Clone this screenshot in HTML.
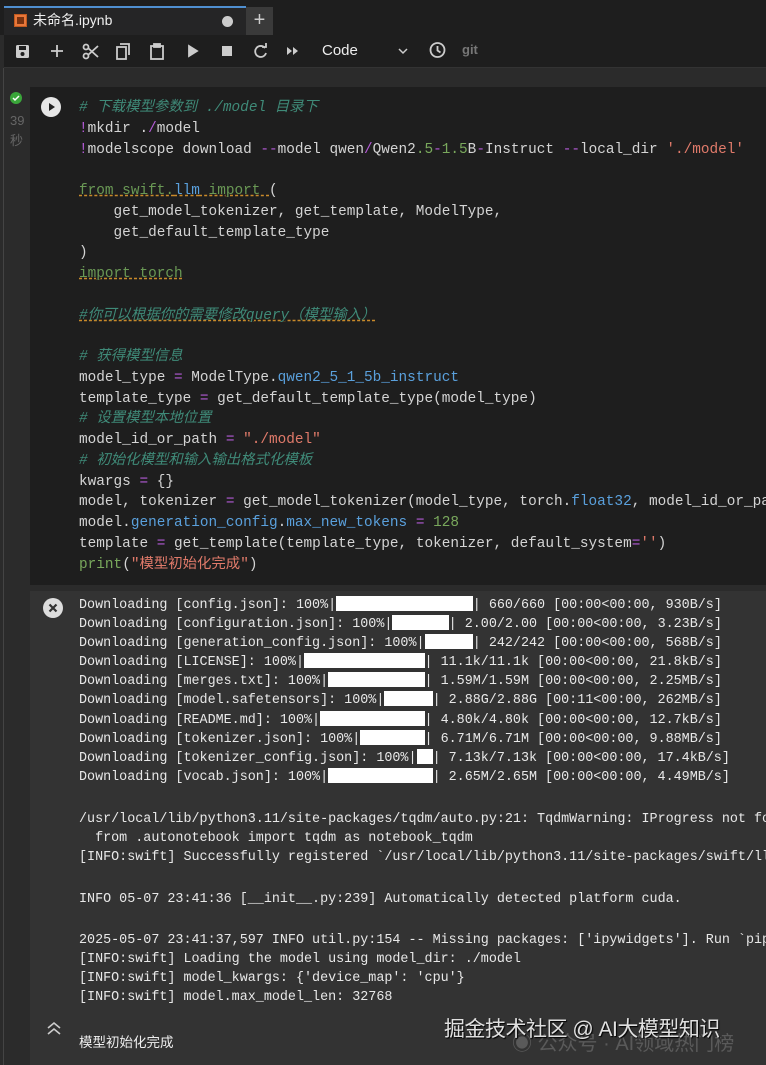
<!DOCTYPE html>
<html><head><meta charset="utf-8"><style>
*{margin:0;padding:0;box-sizing:border-box}
body{width:766px;height:1065px;overflow:hidden;background:#2b2b2b;font-family:"Liberation Sans","Noto Sans CJK SC",sans-serif;position:relative;color:#ddd}
.abs{position:absolute}
pre{font-family:"Liberation Mono","Noto Sans CJK SC",monospace;white-space:pre}
.code{left:79px;top:98px;font-size:14.4px;line-height:20.75px;color:#d4d4d4}
.out{left:79px;font-size:13.4px;line-height:19.1px;color:#e8e8e8}
.c{color:#3f8a78;font-style:italic}
.k{color:#6a9955;text-decoration:underline dashed #c98a2a}
.m{color:#b35ad6}
.n{color:#79a85c}
.s{color:#e07a6a}
.b{color:#5aa0dc}
.o{color:#b35ad6}
.bar{display:inline-block;background:#fff;height:15px;vertical-align:-3px}
</style></head><body>
<div class="abs" style="left:0;top:0;width:766px;height:35px;background:#1e1e1e"></div>
<div class="abs" style="left:4px;top:6px;width:242px;height:29px;background:#252526;border-top:2px solid #4f8fd0"></div>
<div class="abs" style="left:14px;top:14px;width:13px;height:13px;background:#e8773a;border:1px solid #c05a20"><div style="margin:2px;width:7px;height:7px;background:#7a3310"></div></div>
<div class="abs" style="left:33px;top:10px;font-size:14px;color:#eee">未命名.ipynb</div>
<div class="abs" style="left:222px;top:16px;width:11px;height:11px;border-radius:50%;background:#ccc"></div>
<div class="abs" style="left:246px;top:7px;width:27px;height:28px;background:#3a3a3a;color:#ccc;font-size:20px;text-align:center;line-height:26px">+</div>
<div class="abs" style="left:4px;top:35px;width:762px;height:33px;background:#1e1e1e;border-bottom:1px solid #333"></div>
<svg class="abs" style="left:0;top:35px" width="500" height="33" fill="none" stroke="#ccc" stroke-width="1.8">
<rect x="16" y="10" width="13" height="13" rx="1.5" fill="#ccc" stroke="none"/><rect x="19" y="11" width="7" height="4" fill="#1e1e1e" stroke="none"/><circle cx="22.5" cy="19" r="2" fill="#1e1e1e" stroke="none"/>
<path d="M57 10v12M51 16h12"/>
<circle cx="86" cy="21" r="2.5"/><circle cx="86" cy="12" r="2.5"/><path d="M88 13l10 9M88 20l10-9"/>
<rect x="117" y="12" width="9" height="12"/><path d="M120 9h9v11"/>
<rect x="151" y="11" width="12" height="13"/><rect x="154" y="9" width="6" height="3" fill="#ccc"/>
<path d="M189 11l8 5-8 5z" fill="#ccc"/>
<rect x="222" y="11" width="10" height="10" fill="#ccc" stroke="none"/>
<path d="M265 13a5.5 5.5 0 1 0 1 5"/><path d="M262 12h4v-4" />
<path d="M287 12l5 4-5 4zM293 12l5 4-5 4z" fill="#ccc" stroke="none"/>
<path d="M399 14l4 4 4-4" stroke-width="1.5"/>
<circle cx="437.5" cy="15" r="7"/><path d="M437.5 11v4.5l3 2"/>
</svg>
<div class="abs" style="left:322px;top:42px;font-size:15px;color:#eee">Code</div>
<div class="abs" style="left:462px;top:42px;font-size:13px;color:#777;font-weight:bold">git</div>
<div class="abs" style="left:3px;top:68px;width:1px;height:997px;background:#444"></div>
<div class="abs" style="left:10px;top:92px;width:12px;height:12px;border-radius:50%;background:#3aa63a"></div>
<svg class="abs" style="left:10px;top:92px" width="12" height="12"><path d="M3 6l2 2 4-4" stroke="#fff" stroke-width="1.5" fill="none"/></svg>
<div class="abs" style="left:10px;top:111px;font-size:13px;color:#666;line-height:20px">39<br>秒</div>
<div class="abs" style="left:30px;top:87px;width:736px;height:498px;background:#1e1e1e"></div>
<div class="abs" style="left:41px;top:97px;width:20px;height:20px;border-radius:50%;background:#e6e6e6"></div>
<svg class="abs" style="left:41px;top:97px" width="20" height="20"><path d="M8 6l6 4-6 4z" fill="#222"/></svg>
<pre class="abs code"><span class="c"># 下载模型参数到 ./model 目录下</span>
<span class="m">!</span>mkdir .<span class="o">/</span>model
<span class="m">!</span>modelscope download <span class="o">--</span>model qwen<span class="o">/</span>Qwen2<span class="n">.5</span><span class="o">-</span><span class="n">1.5</span>B<span class="o">-</span>Instruct <span class="o">--</span>local_dir <span class="s">'./model'</span>

<span class="k">from swift.<span class="b">llm</span> import </span>(
    get_model_tokenizer, get_template, ModelType,
    get_default_template_type
)
<span class="k">import torch</span>

<span class="c" style="text-decoration:underline dashed #c98a2a">#你可以根据你的需要修改query（模型输入）</span>

<span class="c"># 获得模型信息</span>
model_type <span class="o">=</span> ModelType.<span class="b">qwen2_5_1_5b_instruct</span>
template_type <span class="o">=</span> get_default_template_type(model_type)
<span class="c"># 设置模型本地位置</span>
model_id_or_path <span class="o">=</span> <span class="s">"./model"</span>
<span class="c"># 初始化模型和输入输出格式化模板</span>
kwargs <span class="o">=</span> {}
model, tokenizer <span class="o">=</span> get_model_tokenizer(model_type, torch.<span class="b">float32</span>, model_id_or_path
model.<span class="b">generation_config</span>.<span class="b">max_new_tokens</span> <span class="o">=</span> <span class="n">128</span>
template <span class="o">=</span> get_template(template_type, tokenizer, default_system<span class="o">=</span><span class="s">''</span>)
<span class="n">print</span>(<span class="s">"模型初始化完成"</span>)</pre>
<div class="abs" style="left:30px;top:591px;width:736px;height:474px;background:#333"></div>
<div class="abs" style="left:43px;top:598px;width:20px;height:20px;border-radius:50%;background:#ddd"></div>
<svg class="abs" style="left:43px;top:598px" width="20" height="20"><path d="M6.5 6.5l7 7M13.5 6.5l-7 7" stroke="#333" stroke-width="2.2"/></svg>
<pre class="abs out" style="top:596px">Downloading [config.json]: 100%|<span class="bar" style="width:17ch"></span>| 660/660 [00:00&lt;00:00, 930B/s]
Downloading [configuration.json]: 100%|<span class="bar" style="width:7ch"></span>| 2.00/2.00 [00:00&lt;00:00, 3.23B/s]
Downloading [generation_config.json]: 100%|<span class="bar" style="width:6ch"></span>| 242/242 [00:00&lt;00:00, 568B/s]
Downloading [LICENSE]: 100%|<span class="bar" style="width:15ch"></span>| 11.1k/11.1k [00:00&lt;00:00, 21.8kB/s]
Downloading [merges.txt]: 100%|<span class="bar" style="width:12ch"></span>| 1.59M/1.59M [00:00&lt;00:00, 2.25MB/s]
Downloading [model.safetensors]: 100%|<span class="bar" style="width:6ch"></span>| 2.88G/2.88G [00:11&lt;00:00, 262MB/s]
Downloading [README.md]: 100%|<span class="bar" style="width:13ch"></span>| 4.80k/4.80k [00:00&lt;00:00, 12.7kB/s]
Downloading [tokenizer.json]: 100%|<span class="bar" style="width:8ch"></span>| 6.71M/6.71M [00:00&lt;00:00, 9.88MB/s]
Downloading [tokenizer_config.json]: 100%|<span class="bar" style="width:2ch"></span>| 7.13k/7.13k [00:00&lt;00:00, 17.4kB/s]
Downloading [vocab.json]: 100%|<span class="bar" style="width:13ch"></span>| 2.65M/2.65M [00:00&lt;00:00, 4.49MB/s]</pre>
<pre class="abs out" style="top:810px">/usr/local/lib/python3.11/site-packages/tqdm/auto.py:21: TqdmWarning: IProgress not found
  from .autonotebook import tqdm as notebook_tqdm
[INFO:swift] Successfully registered `/usr/local/lib/python3.11/site-packages/swift/llm</pre>
<pre class="abs out" style="top:890px">INFO 05-07 23:41:36 [__init__.py:239] Automatically detected platform cuda.</pre>
<pre class="abs out" style="top:931px">2025-05-07 23:41:37,597 INFO util.py:154 -- Missing packages: ['ipywidgets']. Run `pip
[INFO:swift] Loading the model using model_dir: ./model
[INFO:swift] model_kwargs: {'device_map': 'cpu'}
[INFO:swift] model.max_model_len: 32768</pre>
<svg class="abs" style="left:46px;top:1020px" width="16" height="16" fill="none" stroke="#ccc" stroke-width="1.6"><path d="M2 8l6-5 6 5M2 14l6-5 6 5"/></svg>
<div class="abs" style="left:79px;top:1031px;font-size:13.5px;color:#eee">模型初始化完成</div>
<div class="abs" style="left:512px;top:1027px;font-size:20px;color:#5a5a5a">◉ 公众号 · AI领域热门榜</div>
<div class="abs" style="left:444px;top:1013px;font-size:21px;color:#e0e0e0;text-shadow:1px 1px 1px #000;letter-spacing:-0.5px">掘金技术社区 @ AI大模型知识</div>
</body></html>
